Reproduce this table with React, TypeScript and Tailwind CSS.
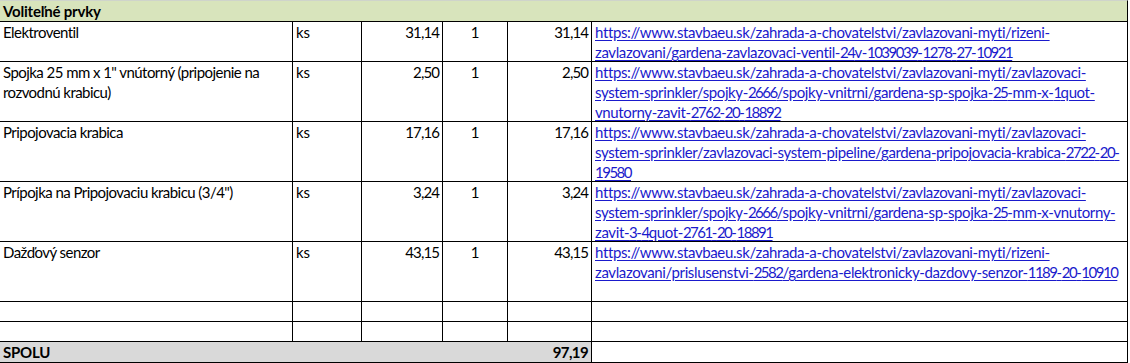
import React from "react";

type Row = {
  name: string[];
  price: string;
  total: string;
  url: string[];
  h: string;
};

const rows: Row[] = [
  {
    name: ["Elektroventil"],
    price: "31,14",
    total: "31,14",
    url: [
      "https://www.stavbaeu.sk/zahrada-a-chovatelstvi/zavlazovani-myti/rizeni-",
      "zavlazovani/gardena-zavlazovaci-ventil-24v-1039039-1278-27-10921",
    ],
    h: "h-[40px]",
  },
  {
    name: ["Spojka 25 mm x 1\" vnútorný (pripojenie na", "rozvodnú krabicu)"],
    price: "2,50",
    total: "2,50",
    url: [
      "https://www.stavbaeu.sk/zahrada-a-chovatelstvi/zavlazovani-myti/zavlazovaci-",
      "system-sprinkler/spojky-2666/spojky-vnitrni/gardena-sp-spojka-25-mm-x-1quot-",
      "vnutorny-zavit-2762-20-18892",
    ],
    h: "h-[60px]",
  },
  {
    name: ["Pripojovacia krabica"],
    price: "17,16",
    total: "17,16",
    url: [
      "https://www.stavbaeu.sk/zahrada-a-chovatelstvi/zavlazovani-myti/zavlazovaci-",
      "system-sprinkler/zavlazovaci-system-pipeline/gardena-pripojovacia-krabica-2722-20-",
      "19580",
    ],
    h: "h-[60px]",
  },
  {
    name: ["Prípojka na Pripojovaciu krabicu (3/4\")"],
    price: "3,24",
    total: "3,24",
    url: [
      "https://www.stavbaeu.sk/zahrada-a-chovatelstvi/zavlazovani-myti/zavlazovaci-",
      "system-sprinkler/spojky-2666/spojky-vnitrni/gardena-sp-spojka-25-mm-x-vnutorny-",
      "zavit-3-4quot-2761-20-18891",
    ],
    h: "h-[60px]",
  },
  {
    name: ["Dažďový senzor"],
    price: "43,15",
    total: "43,15",
    url: [
      "https://www.stavbaeu.sk/zahrada-a-chovatelstvi/zavlazovani-myti/rizeni-",
      "zavlazovani/prislusenstvi-2582/gardena-elektronicky-dazdovy-senzor-1189-20-10910",
    ],
    h: "h-[60px]",
  },
];

function Tight({ text }: { text: string }) {
  const parts = text.split(/(\d+)/).filter((p) => p.length > 0);
  return (
    <>
      {parts.map((p, i) =>
        /^\d+$/.test(p) ? (
          <span key={i} className="tracking-[-1.5px]">
            {p}
          </span>
        ) : (
          <span key={i}>{p}</span>
        )
      )}
    </>
  );
}

const cell = "border-r border-b border-black px-[3px] leading-[20px] whitespace-nowrap overflow-hidden";

export default function App() {
  return (
    <div className="w-[1130px] h-[363px] bg-white text-black text-[15px] tracking-[-0.2px] font-['Lato','Open_Sans',sans-serif] overflow-hidden">
      <div className="grid grid-cols-[293px_69px_81px_65px_84px_536px]">
        <div className="col-span-6 h-[22px] border-t border-t-[#cfd4cb] border-b border-b-black border-r border-r-black bg-[#d8e4bc] px-[3px] leading-[20px] font-bold">
          Voliteľné prvky
        </div>
        {rows.map((r, i) => (
          <React.Fragment key={i}>
            <div className={`${cell} ${r.h} tracking-[-0.55px]`}>
              {r.name.map((n, j) => (
                <div key={j}>{n}</div>
              ))}
            </div>
            <div className={`${cell} ${r.h}`}>ks</div>
            <div className={`${cell} ${r.h} text-right tracking-[-0.9px]`}>{r.price}</div>
            <div className={`${cell} ${r.h} text-center`}>1</div>
            <div className={`${cell} ${r.h} text-right tracking-[-0.9px]`}>{r.total}</div>
            <div className={`${cell} ${r.h} text-[#1a1acc] tracking-[-0.38px]`}>
              {r.url.map((u, j) => (
                <div key={j}>
                  <span className="underline underline-offset-2">
                    <Tight text={u} />
                  </span>
                </div>
              ))}
            </div>
          </React.Fragment>
        ))}
        {[0, 1].map((k) => (
          <React.Fragment key={`e${k}`}>
            <div className={`${cell} h-[20px]`} />
            <div className={`${cell} h-[20px]`} />
            <div className={`${cell} h-[20px]`} />
            <div className={`${cell} h-[20px]`} />
            <div className={`${cell} h-[20px]`} />
            <div className={`${cell} h-[20px]`} />
          </React.Fragment>
        ))}
        <div className="col-span-5 h-[21px] bg-[#d9d9d9] border-r border-b border-black px-[3px] leading-[20px] font-bold flex justify-between">
          <span>SPOLU</span>
          <span className="tracking-[-0.6px]">97,19</span>
        </div>
        <div className={`${cell} h-[21px]`} />
      </div>
    </div>
  );
}
